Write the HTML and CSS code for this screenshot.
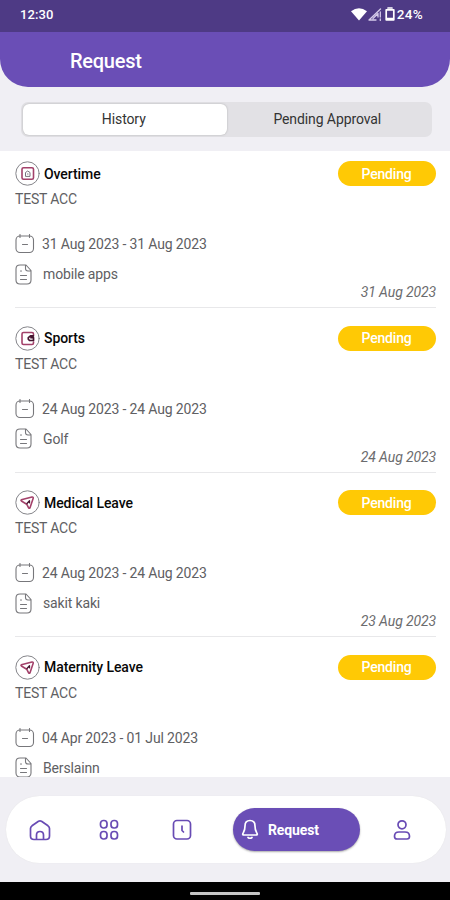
FILE: index.html
```html
<!DOCTYPE html>
<html lang="en">
<head>
<meta charset="utf-8">
<title>Request</title>
<link rel="stylesheet" href="styles.css">
</head>
<body>
<svg class="defs" aria-hidden="true">
  <symbol id="cal" viewBox="0 0 20 20"><rect x="1" y="2" width="17.5" height="16.5" rx="4"/><path d="M5 .5v3M14.5 .5v3M7.500 10.500h5"/></symbol>
  <symbol id="doc" viewBox="0 0 18 21"><path d="M11 1H5Q1 1 1 5v11q0 4 4 4h7q4 0 4-4V6.500zM10.500 1v3.500q0 2.500 2.500 2.500h3M5.500 7h1M5.500 11.500h6M5.500 15.500h6"/></symbol>
  <symbol id="leave" viewBox="0 0 25 25"><circle class="ring" cx="12.500" cy="12.500" r="11.700"/><path d="M6.300 9.800 17 7q1.500-.2 1.200 1.300L15 17.800q-.7 1-1.400 0l-1.900-3.600-4.900-2.900q-1.300-.9-.5-1.500z"/><path class="dark" d="m12 13.500 2.500-2.700v2"/></symbol>
</svg>
<div class="status">
  <span class="clock">12:30</span>
  <div class="indicators">
    <svg class="wifi" viewBox="0 0 16 13"><path d="M0 3.200Q8-2.600 16 3.200L8 12.500z"/></svg>
    <svg class="signal" viewBox="0 0 14 13"><path d="M1 12 12.500 1M1 12h7M5 10.500l5-5V9M12.300 4v5M12.300 11v1.500"/></svg>
    <svg class="battery" viewBox="0 0 10 14"><path d="M3 1h4M1.200 2.800h7.600v10H1.200zM2 11.500h6"/></svg>
    <span class="percent">24%</span>
  </div>
</div>
<header class="header"><h1>Request</h1></header>
<div class="tabs"><div class="tab active">History</div><div class="tab">Pending Approval</div></div>
<main class="list">
  <article class="item">
    <div class="head"><svg class="type" viewBox="0 0 25 25"><circle class="ring" cx="12.500" cy="12.500" r="11.700"/><rect x="7" y="6.800" width="11.500" height="11.500" rx="1.500"/><path class="gray" d="M10.500 15v-3.500l2.200-1.500 2.300 1.500V15zM12.500 13h.5"/></svg><h2>Overtime</h2><span class="badge">Pending</span></div>
    <p class="name">TEST ACC</p>
    <div class="row"><svg class="cal"><use href="#cal"/></svg><span class="range">31 Aug 2023 - 31 Aug 2023</span></div>
    <div class="row note"><svg class="doc"><use href="#doc"/></svg><span>mobile apps</span></div>
    <time>31 Aug 2023</time>
  </article>
  <article class="item">
    <div class="head"><svg class="type" viewBox="0 0 25 25"><circle class="ring" cx="12.500" cy="12.500" r="11.700"/><path d="M18.500 8.500V8q0-1.500-1.500-1.500H8.500Q7 6.500 7 8v9q0 1.500 1.500 1.500H17q1.500 0 1.500-1.500v-1"/><path class="dark thick" d="M18.500 9.800h-3l-2.200 1.800v1.600l1.200 1.300h4v-2.800h-2.500"/></svg><h2>Sports</h2><span class="badge">Pending</span></div>
    <p class="name">TEST ACC</p>
    <div class="row"><svg class="cal"><use href="#cal"/></svg><span class="range">24 Aug 2023 - 24 Aug 2023</span></div>
    <div class="row note"><svg class="doc"><use href="#doc"/></svg><span>Golf</span></div>
    <time>24 Aug 2023</time>
  </article>
  <article class="item">
    <div class="head"><svg class="type"><use href="#leave"/></svg><h2>Medical Leave</h2><span class="badge">Pending</span></div>
    <p class="name">TEST ACC</p>
    <div class="row"><svg class="cal"><use href="#cal"/></svg><span class="range">24 Aug 2023 - 24 Aug 2023</span></div>
    <div class="row note"><svg class="doc"><use href="#doc"/></svg><span>sakit kaki</span></div>
    <time>23 Aug 2023</time>
  </article>
  <article class="item">
    <div class="head"><svg class="type"><use href="#leave"/></svg><h2>Maternity Leave</h2><span class="badge">Pending</span></div>
    <p class="name">TEST ACC</p>
    <div class="row"><svg class="cal"><use href="#cal"/></svg><span class="range">04 Apr 2023 - 01 Jul 2023</span></div>
    <div class="row note"><svg class="doc"><use href="#doc"/></svg><span>Berslainn</span></div>
  </article>
</main>
<nav class="nav">
  <svg class="home" viewBox="0 0 22 22"><path d="M1.500 9.500Q1.500 8 3 6.800L9.500 2.300q1.500-.8 3 0L19 6.800q1.500 1.200 1.500 2.700V17q0 3.500-3.500 3.500H5Q1.500 20.500 1.500 17zM7.500 20.500V16q0-3.500 3.500-3.500t3.500 3.500v4.500"/></svg>
  <svg class="grid" viewBox="0 0 20 22"><rect x="1.500" y="1.500" width="6.500" height="7.500" rx="3"/><rect x="12" y="1.500" width="6.500" height="7.500" rx="3"/><rect x="1.500" y="12.500" width="6.500" height="7.500" rx="3"/><rect x="12" y="12.500" width="6.500" height="7.500" rx="3"/></svg>
  <svg class="time" viewBox="0 0 20 22"><rect x="1.500" y="1.500" width="17" height="18.500" rx="3.500"/><path d="M10 7v4.500l1.500 1.500"/></svg>
  <div class="current"><svg class="bell" viewBox="0 0 18 21"><path d="M9 1.500q5 0 5 5.500 0 4 1.600 6.500 1.700 2.500-.8 2.500H3.200q-2.500 0-.8-2.500Q4 11 4 7 4 1.500 9 1.500zM7 18.500q2 1.500 4 0"/></svg><span>Request</span></div>
  <svg class="person" viewBox="0 0 18 22"><circle cx="9" cy="5.800" r="4"/><path d="M6 13h6q4.500 0 4.500 4.300 0 2.700-2.500 2.700H4q-2.500 0-2.500-2.700Q1.500 13 6 13z"/></svg>
</nav>
<footer class="system"><div class="handle"></div></footer>
</body>
</html>
```
FILE: styles.css
```css
* { box-sizing: border-box; }
body { margin: 0; width: 450px; height: 900px; overflow: hidden; display: flex; flex-direction: column; background: #f0eff4; font-family: Roboto, "Liberation Sans", sans-serif; color: #606063; }
h1, h2, p { margin: 0; }
svg { fill: none; stroke-linecap: round; stroke-linejoin: round; flex: none; }
.defs { display: none; }
.status { height: 32px; flex: none; background: #4e3a85; color: #fff; display: flex; justify-content: space-between; padding: 0 27px 4px 20px; align-items: center; font-weight: 500; }
.clock { font-size: 13px; letter-spacing: .1px; }
.indicators { display: flex; align-items: center; }
.wifi { width: 16px; height: 13px; fill: #fff; margin-right: 1px; }
.signal { width: 14px; height: 13px; stroke: #d5cbea; stroke-width: 1.300; margin-right: 3px; }
.battery { width: 10px; height: 14px; stroke: #fff; stroke-width: 1.700; margin-right: 2px; }
.percent { font-size: 13.500px; letter-spacing: .3px; }
.header { height: 55px; flex: none; padding-left: 70px; display: flex; align-items: center; background: #6a4eb6; border-radius: 0 0 28px 28px; color: #fff; }
h1 { font-size: 20px; letter-spacing: -.25px; line-height: 24px; font-weight: 500; margin-top: 3px; }
.tabs { height: 35px; margin: 15px 18px 14px 21px; padding: 2px; background: #e2e1e5; border-radius: 7px; display: flex; flex: none; }
.tab { flex: 1; display: flex; align-items: center; justify-content: center; font-size: 14px; letter-spacing: -.1px; color: #333; border-radius: 6px; padding: 0 2px 2px 0; }
.active { background: #fff; box-shadow: 0 0 2px #aaa; }
.list { height: 626px; flex: none; overflow: hidden; background: #fff; padding: 1px 14px 0 15px; }
.item { height: 164.600px; padding-top: 9px; display: flex; flex-direction: column; }
.item:not(:last-child) { height: 156px; border-bottom: 1.500px solid #e8e8ea; margin-bottom: 8.600px; }
.head { height: 25px; display: flex; align-items: center; flex: none; }
.type { width: 25px; height: 25px; stroke: #a3416a; stroke-width: 1.600; }
.ring { stroke: #85858a; stroke-width: 1; }
.gray { stroke: #77717c; stroke-width: 1; }
.dark { stroke: #45142f; stroke-width: 1.300; }
.thick { stroke-width: 1.700; }
h2 { font-size: 14px; letter-spacing: -.08px; font-weight: 500; color: #080808; margin-left: 4px; flex: 1; }
.badge { width: 98px; height: 25px; border-radius: 13px; background: #ffc905; color: #fff; display: flex; align-items: center; justify-content: center; font-size: 14px; letter-spacing: -.2px; font-weight: 500; padding-right: 1px; }
.name { font-size: 14px; letter-spacing: -.2px; line-height: 26px; height: 26px; margin-bottom: 19px; }
.row { height: 26px; flex: none; display: flex; align-items: center; font-size: 14px; letter-spacing: -.15px; gap: 7px; margin-bottom: 4px; }
.note { gap: 10px; margin-bottom: 0; }
.cal { width: 20px; height: 20px; stroke: #77777b; stroke-width: 1.100; }
.doc { width: 18px; height: 21px; stroke: #77777b; stroke-width: 1.100; }
time { align-self: flex-end; font-size: 14px; letter-spacing: -.12px; line-height: 11px; font-style: italic; color: #6b6b6e; }
.nav { height: 67px; flex: none; margin: 19px 4px 0 6px; border-radius: 34px; background: #fff; display: flex; align-items: center; padding-left: 23px; box-shadow: 0 0 1px #ddd; }
.nav svg { stroke: #684bb4; stroke-width: 1.700; }
.nav .home { width: 22px; height: 22px; }
.nav .grid { width: 20px; height: 22px; margin-left: 48px; }
.nav .time { width: 20px; height: 22px; margin-left: 53px; }
.current { width: 127px; height: 43px; border-radius: 22px; margin-left: 41px; padding-left: 8px; background: #6a4eb6; color: #fff; display: flex; align-items: center; gap: 9px; font-size: 14px; letter-spacing: -.12px; font-weight: 700; box-shadow: 0 1px 2px #aaa; }
.nav .bell { width: 18px; height: 21px; stroke: #fff; }
.nav .person { width: 18px; height: 22px; margin-left: 33px; }
.system { margin-top: auto; height: 18px; flex: none; background: #000; display: flex; justify-content: center; align-items: flex-start; padding-top: 10px; }
.handle { width: 70px; height: 3px; border-radius: 1px; background: #c5c5c5; }
```
